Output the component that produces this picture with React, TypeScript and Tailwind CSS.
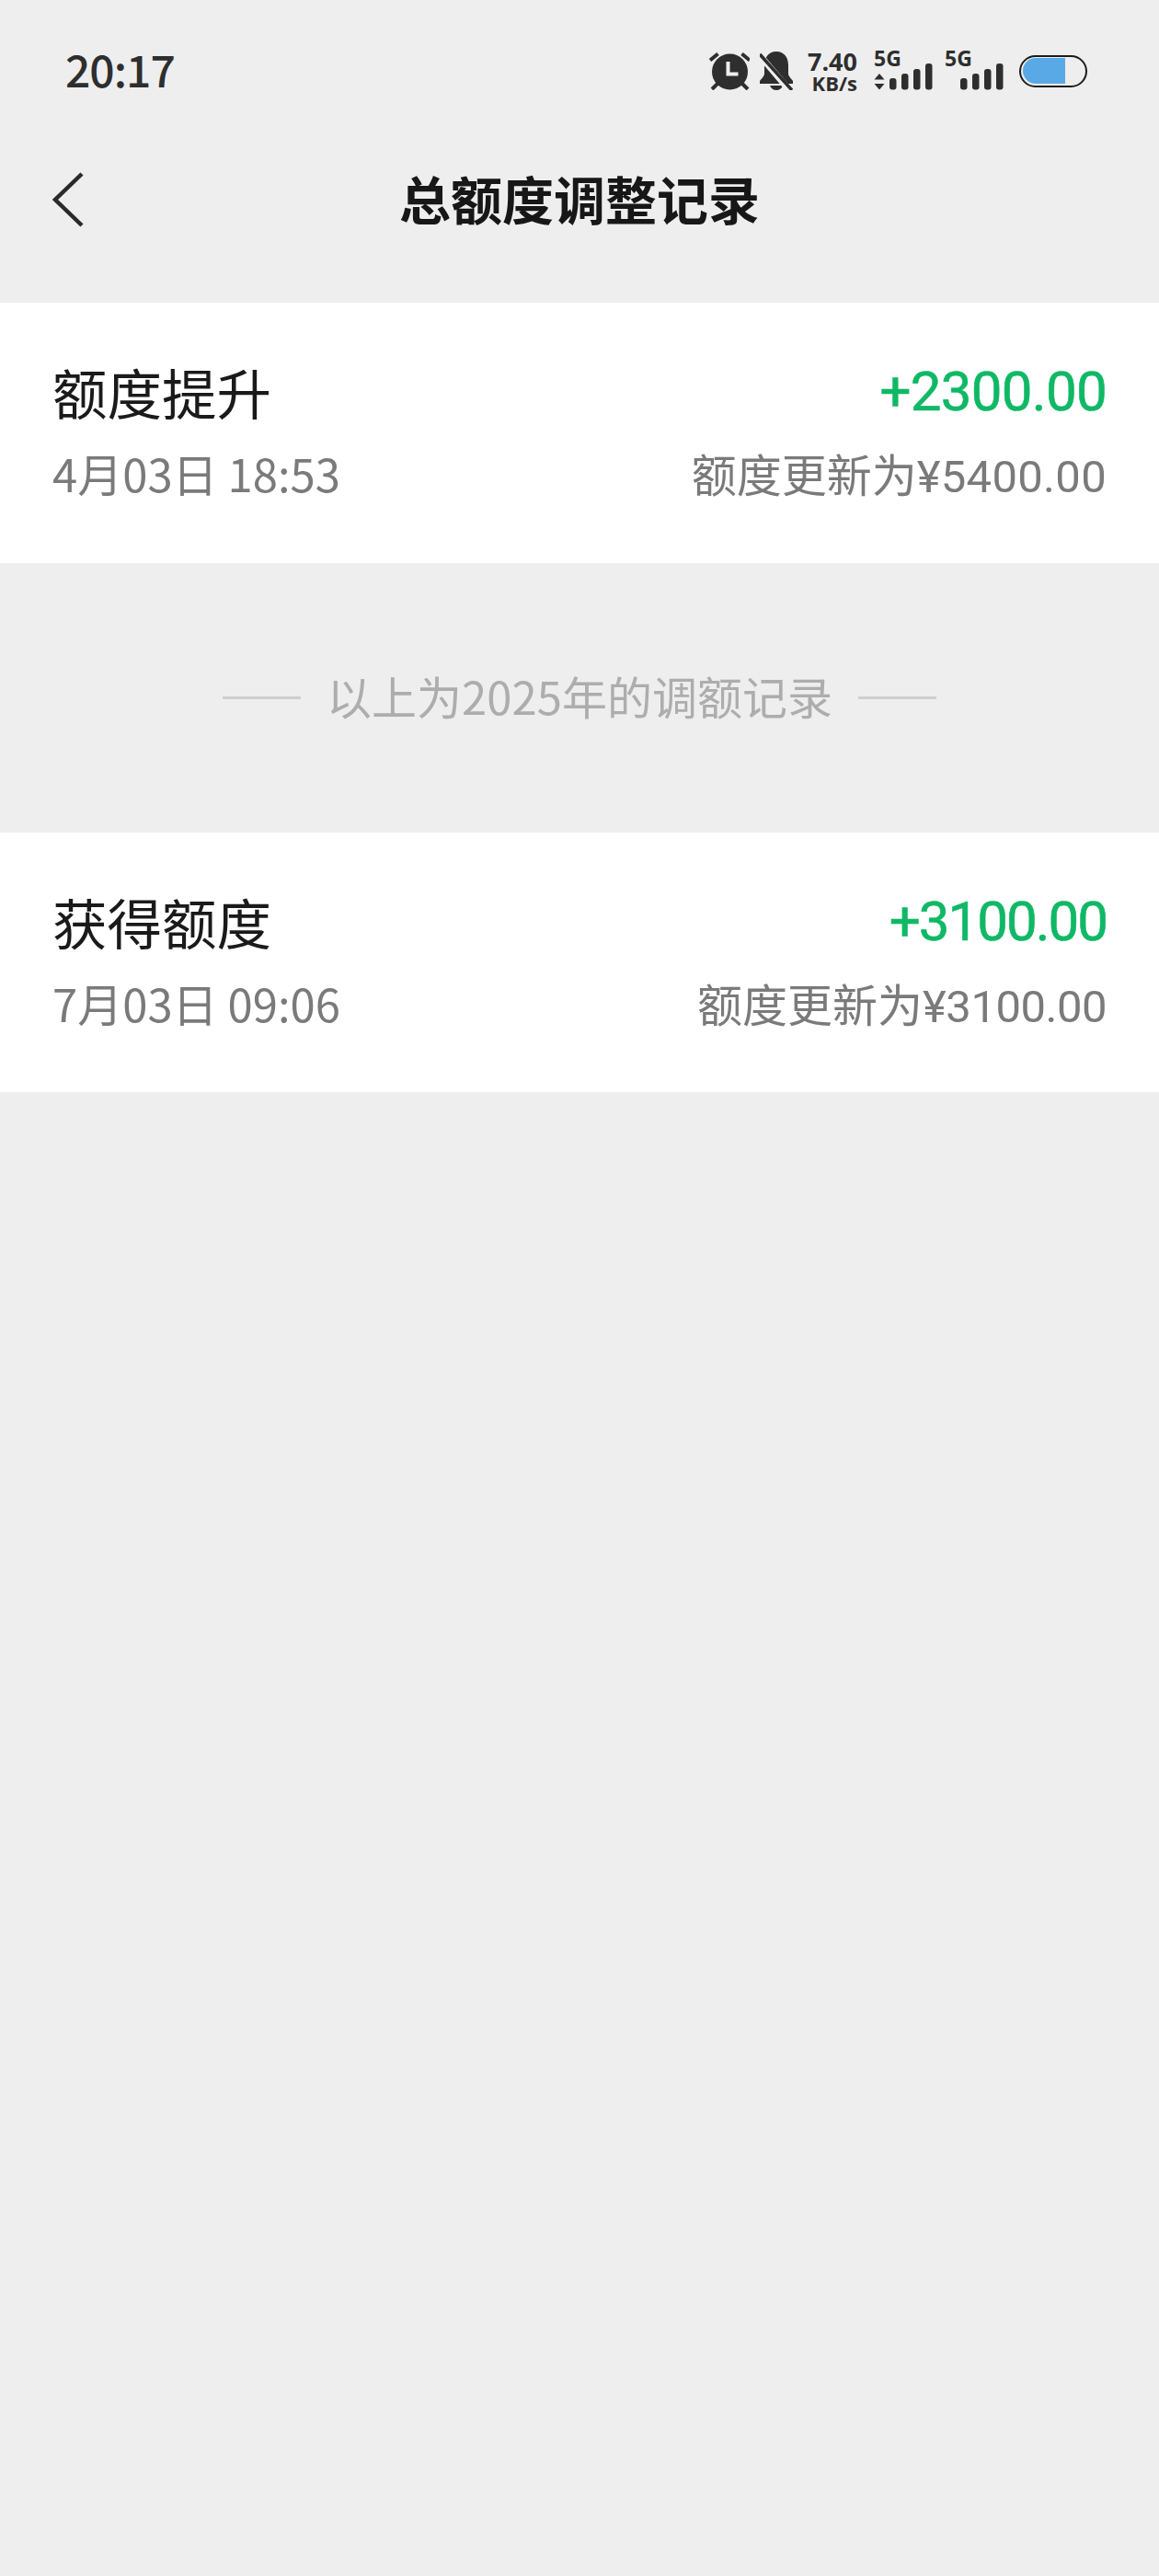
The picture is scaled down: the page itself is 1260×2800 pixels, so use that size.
const cjk = "font-['Noto_Sans_CJK_SC','Noto_Sans',sans-serif]";

function AlarmIcon() {
  return (
    <svg width="44" height="42" viewBox="0 0 44 42" className="text-[#2e2e2e]">
      <circle cx="22.500" cy="22" r="19.500" fill="currentColor" />
      <path d="M1 9.500 9.500 2.500M44 9.500 35.500 2.500M3 41l6-6M42 41l-6-6" stroke="currentColor" strokeWidth="4" fill="none" />
      <path d="M20.500 11v13.500h11" stroke="#efefef" strokeWidth="4" fill="none" />
    </svg>
  );
}

function BellOffIcon() {
  return (
    <svg width="36" height="42" viewBox="0 0 36 42" className="text-[#2e2e2e]">
      <path
        d="M18 0c9 0 13 7 13 15v9c0 3 3 5 5 8v3H0v-3c2-3 5-5 5-8v-9C5 7 9 0 18 0Z"
        fill="currentColor"
      />
      <path d="M11 37h14c-1 3-4 5-7 5s-6-2-7-5Z" fill="currentColor" />
      <path d="M-1 3 33 43" stroke="#efefef" strokeWidth="7" />
      <path d="M0 3 35 42" stroke="currentColor" strokeWidth="3.600" />
    </svg>
  );
}

function Signal({ arrows }: { arrows?: boolean }) {
  return (
    <div className="relative w-[64px] h-[42px]">
      <span className="absolute left-0 top-[-5px] text-[23px] leading-[24px] font-bold text-[#2e2e2e] font-['Open_Sans',sans-serif]">
        5G
      </span>
      <svg width="64" height="42" viewBox="0 0 64 42" fill="#2e2e2e" className="block">
        {arrows && <path d="M6 24l5.500 6.500H.5ZM6 41.500l5.500-6.500H.5Z" />}
        <rect x="17" y="29" width="7.500" height="12.500" rx="3" />
        <rect x="30" y="24" width="7.500" height="17.500" rx="3" />
        <rect x="43" y="19" width="7.500" height="22.500" rx="3" />
        <rect x="56" y="13" width="7.500" height="28.500" rx="3" />
      </svg>
    </div>
  );
}

function Battery() {
  return (
    <div className="w-[74px] h-[35px] rounded-full border-[2.500px] border-[#1c1c1c] p-[1.500px] overflow-hidden">
      <div className="w-[46px] h-full bg-[#58a9e6] rounded-l-full" />
    </div>
  );
}

function StatusBar() {
  return (
    <div className="h-[154px] flex items-center justify-between pl-[71px] pr-[78px]">
      <span className={`mb-[6px] text-[48px] leading-none font-medium text-[#2e2e2e] tracking-[-1px] ${cjk}`}>20:17</span>
      <div className="flex items-center">
        <AlarmIcon />
        <div className="ml-[11px]">
          <BellOffIcon />
        </div>
        <div className="ml-[16px] flex flex-col items-end text-[#2e2e2e] font-bold font-['Open_Sans',sans-serif]">
          <span className="text-[27px] leading-[26px]">7.40</span>
          <span className="text-[22px] leading-[20px]">KB/s</span>
        </div>
        <div className="ml-[18px]">
          <Signal arrows />
        </div>
        <div className="ml-[13px]">
          <Signal />
        </div>
        <div className="ml-[17px]">
          <Battery />
        </div>
      </div>
    </div>
  );
}

function NavBar() {
  return (
    <div className="relative h-[175px] pb-[53px] flex items-center justify-center">
      <svg
        width="34"
        height="60"
        viewBox="0 0 34 60"
        fill="none"
        stroke="#2a2a2a"
        strokeWidth="4.500"
        className="absolute left-[57px] top-[33px]"
      >
        <path d="M32 2 3 30l29 28" />
      </svg>
      <h1 className={`text-[56px] leading-none font-bold text-[#171717] ${cjk}`}>总额度调整记录</h1>
    </div>
  );
}

type Rec = {
  title: string;
  date: string;
  amount: string;
  total: string;
  amountTracking: string;
  totalTracking: string;
};

function RecordRow({ rec }: { rec: Rec }) {
  return (
    <div className={`bg-white h-[282.500px] px-[57px] pt-[53px] flex justify-between ${cjk}`}>
      <div>
        <p className="text-[59.500px] leading-[86px] text-[#1a1a1a]">{rec.title}</p>
        <p className="mt-[8px] text-[49px] leading-[76px] text-[#7a7a7a]">{rec.date}</p>
      </div>
      <div className="flex flex-col items-end">
        <p
          className={`pt-[2px] text-[60px] leading-[84px] text-[#10b866] [-webkit-text-stroke:0.6px_#10b866] font-['Roboto',sans-serif] ${rec.amountTracking}`}
        >
          {rec.amount}
        </p>
        <p className="mt-[8px] text-[49px] leading-[76px] text-[#7a7a7a]">
          额度更新为<span className={`font-['Roboto',sans-serif] ${rec.totalTracking}`}>{rec.total}</span>
        </p>
      </div>
    </div>
  );
}

function YearDivider({ text }: { text: string }) {
  return (
    <div className="h-[293px] flex items-center justify-center gap-[28px]">
      <div className="w-[85px] h-[3px] bg-[#cfcfcf]" />
      <span className={`mb-[5px] text-[49px] leading-none text-[#adadad] ${cjk}`}>{text}</span>
      <div className="w-[85px] h-[3px] bg-[#cfcfcf]" />
    </div>
  );
}

export default function App() {
  return (
    <div className="w-full h-[2800px] bg-[#eeeeee]">
      <StatusBar />
      <NavBar />
      <RecordRow
        rec={{
          title: "额度提升",
          date: "4月03日 18:53",
          amount: "+2300.00",
          total: "¥5400.00",
          amountTracking: "tracking-[-0.700px]",
          totalTracking: "tracking-[0.300px]",
        }}
      />
      <YearDivider text="以上为2025年的调额记录" />
      <RecordRow
        rec={{
          title: "获得额度",
          date: "7月03日 09:06",
          amount: "+3100.00",
          total: "¥3100.00",
          amountTracking: "tracking-[-2px]",
          totalTracking: "tracking-[-0.500px]",
        }}
      />
    </div>
  );
}
